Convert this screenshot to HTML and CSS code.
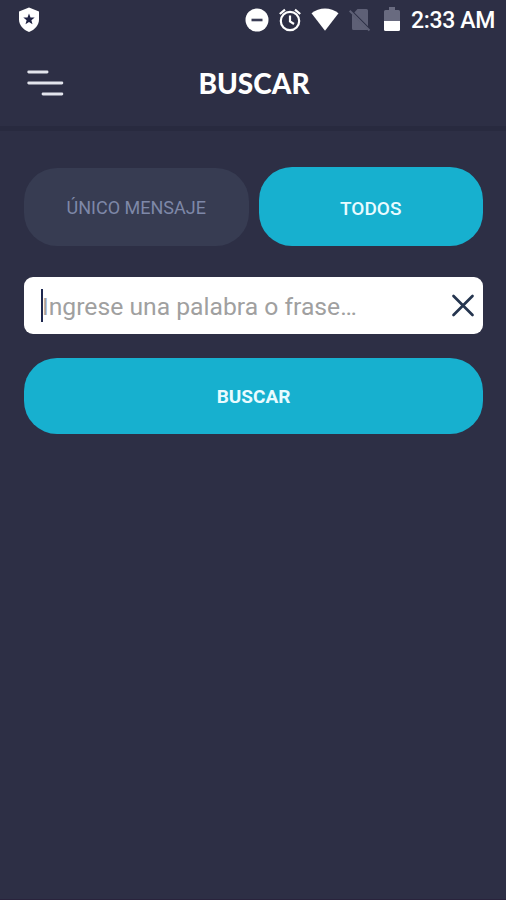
FILE: index.html
```html
<!doctype html>
<html lang="es">
<head>
	<meta charset="UTF-8">
	<meta name="viewport" content="width=device-width, initial-scale=1.0">
	<title>Buscar</title>
	<link rel="stylesheet" href="styles.css">
</head>
<body>
	<div class="app">
		<div class="status-bar">
			<svg class="shield" width="22" height="26" viewBox="0 0 22 26">
				<path fill="#fff" d="M11 .5 21 4.500v8c0 5.500-4.200 10.500-10 12.500C5.200 23 1 18 1 12.500v-8z"/>
				<path fill="#202344" d="m11 6.500 1.500 3.900 4.200.2-3.300 2.600 1.100 4.100-3.500-2.300-3.500 2.300 1.100-4.100-3.300-2.600 4.200-.2z"/>
			</svg>
			<div class="status-right">
				<svg class="dnd" width="24" height="24" viewBox="0 0 24 24">
					<circle cx="12" cy="12" r="11.500" fill="#fff"/>
					<path stroke="#3a3c55" stroke-width="2.600" d="M6.500 12h11"/>
				</svg>
				<svg class="alarm" width="24" height="24" viewBox="0 0 24 24" fill="none" stroke="#fff" stroke-width="2.200">
					<circle cx="12" cy="13" r="9.200"/>
					<path d="M12 7.500v6l4 2.500M1.800 6 7 1.700M22.200 6 17 1.700"/>
				</svg>
				<svg class="wifi" width="28" height="24" viewBox="0 0 28 24">
					<path fill="#fff" d="M.5 5.200C8-1.200 20-1.200 27.500 5.200L14 22.800z"/>
				</svg>
				<svg class="sim" width="22" height="24" viewBox="0 0 22 24">
					<path fill="#5e6076" d="M8.500 1h9A1.500 1.500 0 0 1 19 2.500v15.800L5.300 4.600zM3 6.200 18.600 21.200 18 22H4.500A1.500 1.500 0 0 1 3 20.500z"/>
					<path stroke="#5e6076" stroke-width="2" d="m.7 2.800 19.800 19.700"/>
				</svg>
				<svg class="battery" width="16" height="25" viewBox="0 0 16 25">
					<path fill="#696b80" d="M5 0h6v3h3.500Q16 3 16 4.500V14H0V4.500Q0 3 1.500 3H5z"/>
					<path fill="#fff" d="M0 14h16v8.500q0 1.500-1.500 1.500h-13Q0 24 0 22.500z"/>
				</svg>
				<span class="time">2:33 AM</span>
			</div>
		</div>
		<div class="header">
			<svg class="menu" width="38" height="28" viewBox="0 0 38 28" stroke="#e2e4ec" stroke-width="2.800" stroke-linecap="round">
				<path d="M2.700 3h18.400M2.700 14h33.200M17 25h18.900"/>
			</svg>
			<h1 class="title">BUSCAR</h1>
		</div>
		<div class="content">
			<div class="tabs">
				<button class="btn tab">ÚNICO MENSAJE</button>
				<button class="btn tab active">TODOS</button>
			</div>
			<div class="search">
				<span class="cursor"></span>
				<span class="placeholder">Ingrese una palabra o frase…</span>
				<svg class="clear" width="24" height="24" viewBox="0 0 24 24" stroke="#25354f" stroke-width="2.700" stroke-linecap="round">
					<path d="m2.500 2 19 19M21.500 2l-19 19"/>
				</svg>
			</div>
			<button class="btn submit">BUSCAR</button>
		</div>
	</div>
</body>
</html>
```
FILE: styles.css
```css
* {
	box-sizing: border-box;
}

body {
	margin: 0;
	background-color: #2d2f45;
	font-family: Roboto, "Liberation Sans", sans-serif;
}

.app {
	height: 900px;
	overflow: hidden;
	border-bottom: 1px solid #29233c;
}

.status-bar {
	display: flex;
	justify-content: space-between;
	align-items: center;
	height: 40px;
	padding: 0 12px 0 18px;
}

.status-right {
	display: flex;
	align-items: center;
}

.alarm {
	margin-left: 9px;
}

.wifi {
	margin-left: 9px;
}

.sim {
	margin-left: 10px;
}

.battery {
	margin-left: 13px;
	margin-bottom: 1px;
}

.time {
	width: 83px;
	margin-left: 11px;
	padding-top: 2px;
	color: #fff;
	font-size: 23px;
	font-weight: 500;
	letter-spacing: -0.35px;
	line-height: 38px;
	white-space: nowrap;
}

.header {
	display: grid;
	grid-template-columns: 38px 1fr 38px;
	align-items: center;
	height: 91px;
	padding: 0 24px 0 26px;
	border-bottom: 5px solid #282a3f;
}

.title {
	margin: 0;
	color: #fff;
	font: 900 28px/36px Lato, sans-serif;
	text-align: center;
}

.content {
	padding: 36px 23px 0 24px;
}

.tabs {
	display: grid;
	grid-template-columns: 1fr 1fr;
	column-gap: 10px;
}

.btn {
	display: block;
	width: 100%;
	padding: 0;
	border: 0;
	border-radius: 33px;
	background-color: #17b0cf;
	color: #e9fbff;
	font: 500 19px/21px Roboto, sans-serif;
}

.tab {
	height: 79px;
	padding-top: 3px;
}

.tab:not(.active) {
	height: 78px;
	margin-top: 1px;
	padding-top: 1px;
	background-color: #373c52;
	color: #7e88a8;
	font-size: 18px;
	font-weight: 400;
}

.search {
	display: flex;
	align-items: center;
	height: 57px;
	margin-top: 31px;
	padding: 0 8px 0 17px;
	border-radius: 9px;
	background-color: #fff;
}

.cursor {
	width: 2px;
	height: 33px;
	margin-right: -1px;
	background-color: #1e2850;
}

.placeholder {
	flex: 1;
	padding-top: 2px;
	color: #a0a0a0;
	font-size: 24.7px;
	white-space: nowrap;
}

.submit {
	height: 76px;
	margin-top: 24px;
	font-weight: 700;
}
```
